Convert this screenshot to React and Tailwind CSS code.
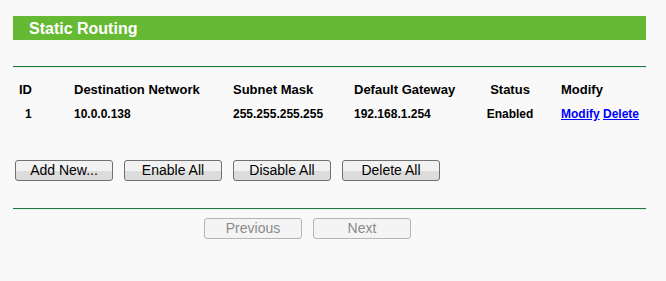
const routes = [
  { id: 1, dest: "10.0.0.138", mask: "255.255.255.255", gw: "192.168.1.254", status: "Enabled" },
];

function Btn({ children, disabled }) {
  if (disabled) {
    return (
      <button className="w-[98px] h-[21px] rounded-[3px] border border-[#b5b5b5] bg-[#f4f4f4] text-[14px] leading-[19px] text-[#8a8a8a]">
        {children}
      </button>
    );
  }
  return (
    <button className="w-[98px] h-[21px] rounded-[3px] border border-[#707070] bg-gradient-to-b from-[#f2f2f2] from-50% to-[#dcdcdc] to-50% text-[14px] leading-[19px] text-black">
      {children}
    </button>
  );
}

export default function App() {
  return (
    <div className="w-[666px] h-[281px] bg-[#f9f9f9] font-['Liberation_Sans',Arial,sans-serif] pt-4">
      <div className="ml-[13px] w-[633px]">
        <div className="h-6 bg-[#66b933] pl-4 text-[16px] leading-[25px] font-bold text-white">
          Static Routing
        </div>

        <div className="mt-[26px] border-t border-[#1a7a3e] border-b border-b-[#e4eee7]"></div>

        <div className="mt-[10px] pl-[6px] grid grid-cols-[55px_159px_121px_121px_70px_1fr] text-black">
          <div className="h-6 leading-6 text-[13px] font-bold">ID</div>
          <div className="h-6 leading-6 text-[13px] font-bold">Destination Network</div>
          <div className="h-6 leading-6 text-[13px] font-bold">Subnet Mask</div>
          <div className="h-6 leading-6 text-[13px] font-bold">Default Gateway</div>
          <div className="h-6 leading-6 text-[13px] font-bold text-center">Status</div>
          <div className="h-6 leading-6 text-[13px] font-bold pl-4">Modify</div>
          {routes.map((r) => (
            <div key={r.id} className="contents">
              <div className="h-6 leading-6 text-[12px] font-bold pl-[6px]">{r.id}</div>
              <div className="h-6 leading-6 text-[12px] font-bold">{r.dest}</div>
              <div className="h-6 leading-6 text-[12px] font-bold">{r.mask}</div>
              <div className="h-6 leading-6 text-[12px] font-bold">{r.gw}</div>
              <div className="h-6 leading-6 text-[12px] font-bold text-center">{r.status}</div>
              <div className="h-6 leading-6 text-[12px] font-bold pl-4">
                <a href="#" className="text-[#0000ff] underline">Modify</a>{" "}
                <a href="#" className="text-[#0000ff] underline">Delete</a>
              </div>
            </div>
          ))}
        </div>

        <div className="mt-[34px] pl-[2px] flex gap-[11px]">
          <Btn>Add New...</Btn>
          <Btn>Enable All</Btn>
          <Btn>Disable All</Btn>
          <Btn>Delete All</Btn>
        </div>

        <div className="mt-[27px] border-t border-[#1a7a3e] border-b border-b-[#e4eee7]"></div>

        <div className="mt-[8px] pl-[191px] flex gap-[11px]">
          <Btn disabled>Previous</Btn>
          <Btn disabled>Next</Btn>
        </div>
      </div>
    </div>
  );
}
